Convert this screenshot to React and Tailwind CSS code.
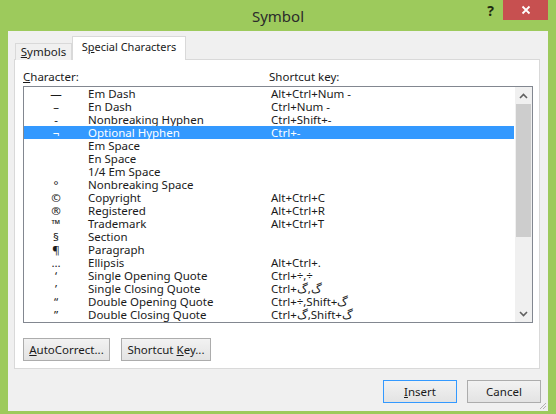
import React from 'react';

const rows = [
    { sym: '—', name: 'Em Dash', key: 'Alt+Ctrl+Num -' },
    { sym: '–', name: 'En Dash', key: 'Ctrl+Num -' },
    { sym: '-', name: 'Nonbreaking Hyphen', key: 'Ctrl+Shift+-' },
    { sym: '¬', name: 'Optional Hyphen', key: 'Ctrl+-' },
    { sym: '', name: 'Em Space', key: '' },
    { sym: '', name: 'En Space', key: '' },
    { sym: '', name: '1/4 Em Space', key: '' },
    { sym: '°', name: 'Nonbreaking Space', key: '' },
    { sym: '©', name: 'Copyright', key: 'Alt+Ctrl+C' },
    { sym: '®', name: 'Registered', key: 'Alt+Ctrl+R' },
    { sym: '™', name: 'Trademark', key: 'Alt+Ctrl+T' },
    { sym: '§', name: 'Section', key: '' },
    { sym: '¶', name: 'Paragraph', key: '' },
    { sym: '…', name: 'Ellipsis', key: 'Alt+Ctrl+.' },
    { sym: '‘', name: 'Single Opening Quote', key: 'Ctrl+÷,÷' },
    { sym: '’', name: 'Single Closing Quote', key: 'Ctrl+گ,گ' },
    { sym: '“', name: 'Double Opening Quote', key: 'Ctrl+÷,Shift+گ' },
    { sym: '”', name: 'Double Closing Quote', key: 'Ctrl+گ,Shift+گ' },
];

const selected = 3;

function Chevron({ up }) {
    return (
        <svg width="9" height="6" viewBox="0 0 9 6">
            <polyline
                points={up ? '1,5 4.5,1.5 8,5' : '1,1 4.5,4.5 8,1'}
                fill="none"
                stroke="#606060"
                strokeWidth="1.6"
            />
        </svg>
    );
}

function Button({ children, primary, className = '' }) {
    return (
        <button
            className={`h-[23px] text-[11.5px] text-[#1a1a1a] bg-gradient-to-b from-[#f2f2f2] to-[#e3e3e3] border ${primary
                ? 'border-[#3399ff]'
                : 'border-[#acacac]'} ${className}`}
        >
            {children}
        </button>
    );
}

export default function App() {
    return (
        <div
            className="w-[556px] h-[414px] bg-[#9dca5c] flex flex-col"
            style={{ fontFamily: '"Noto Sans", "Open Sans", sans-serif' }}
        >
            {/* title bar */}
            <div className="h-[31px] flex">
                <div className="flex-1 basis-0" />
                <div className="pt-[5px] text-[15px] text-[#2b2b2b]">Symbol</div>
                <div className="flex-1 basis-0 flex justify-end items-start">
                    <div className="mt-[4px] mr-[9px] text-[14px] font-bold leading-none text-[#1f2a10]">?</div>
                    <div className="w-[45px] h-[20px] bg-[#c75050] flex items-center justify-center mr-[8px]">
                        <svg width="10" height="10" viewBox="0 0 10 10">
                            <path d="M1.5 1.5 L8.5 8.5 M8.5 1.5 L1.5 8.5" stroke="#fff" strokeWidth="1.8" />
                        </svg>
                    </div>
                </div>
            </div>

            {/* client */}
            <div className="mx-[8px] h-[380px] bg-[#f0f0f0] flex flex-col relative">
                {/* tabs */}
                <div className="flex items-end h-[22px] pl-[7px] mt-[6px] relative z-10">
                    <div className="h-[17px] w-[57px] text-center border border-b-0 border-[#d9d9d9] bg-[#f0f0f0] text-[11.5px] leading-[15px] text-[#1a1a1a] mb-[-1px]">
                        <span className="underline">S</span>ymbols
                    </div>
                    <div className="h-[24px] w-[114px] text-center border border-b-0 border-[#d9d9d9] bg-white text-[11px] leading-[20px] text-[#1a1a1a] mb-[-1px]">
                        S<span className="underline">p</span>ecial Characters
                    </div>
                </div>

                {/* panel */}
                <div className="ml-[6px] mr-[8px] h-[310px] border border-[#d9d9d9] bg-white pl-[8px] pt-[10px] flex flex-col text-[11.5px] text-[#1a1a1a]">
                    <div className="flex leading-[13px] h-[13px]">
                        <div className="w-[246px]">
                            <span className="underline">C</span>haracter:
                        </div>
                        <div>Shortcut key:</div>
                    </div>
                    <div className="mt-[3px] w-[510px] h-[237px] border border-[#828790] flex">
                        <div className="flex-1 flex flex-col">
                            {rows.map((r, i) => (
                                <div
                                    key={r.name}
                                    className={`flex h-[13px] leading-[13px] mr-[1px] ${i === selected
                                        ? 'bg-[#3399ff] text-white'
                                        : ''}`}
                                >
                                    <div className="w-[64px] text-center">{r.sym}</div>
                                    <div className="w-[183px]">{r.name}</div>
                                    <div>{r.key}</div>
                                </div>
                            ))}
                        </div>
                        <div className="w-[17px] bg-[#f0f0f0] flex flex-col">
                            <div className="h-[17px] flex items-center justify-center">
                                <Chevron up />
                            </div>
                            <div className="flex-1">
                                <div className="h-[133px] mx-[1px] bg-[#cdcdcd]" />
                            </div>
                            <div className="h-[17px] flex items-center justify-center">
                                <Chevron />
                            </div>
                        </div>
                    </div>
                    <div className="flex gap-[11px] mt-[15px]">
                        <Button className="w-[87px]">
                            <span className="underline">A</span>utoCorrect...
                        </Button>
                        <Button className="w-[90px]">
                            Shortcut <span className="underline">K</span>ey...
                        </Button>
                    </div>
                </div>

                {/* bottom buttons */}
                <div className="flex justify-end gap-[10px] mt-[11px] mr-[7px]">
                    <Button primary className="w-[74px]">
                        <span className="underline">I</span>nsert
                    </Button>
                    <Button className="w-[74px]">Cancel</Button>
                </div>

                {/* resize grip */}
                <svg className="absolute right-[1px] bottom-[1px]" width="10" height="10" viewBox="0 0 10 10">
                    <path d="M9 3 L3 9 M9 6 L6 9" stroke="#b0b0b0" strokeWidth="1" />
                </svg>
            </div>
        </div>
    );
}
